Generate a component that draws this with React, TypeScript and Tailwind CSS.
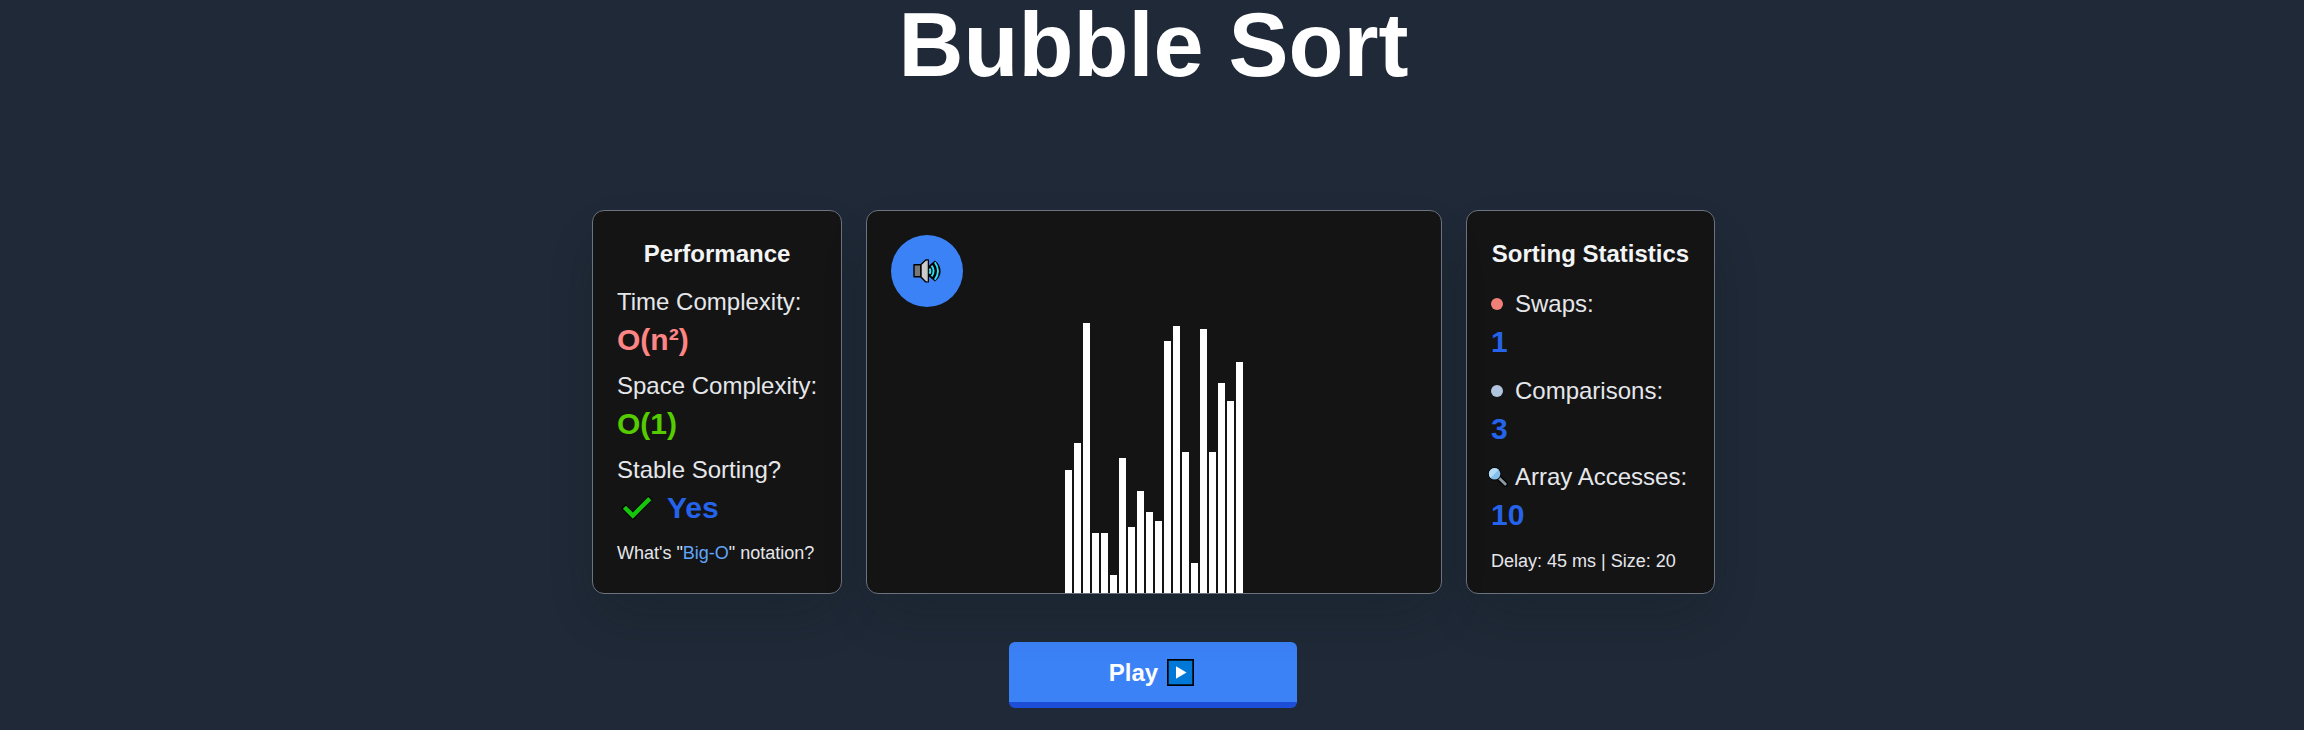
import React from "react";

const bars = [123, 150, 270, 60, 60, 18, 135, 66, 102, 81, 72, 252, 267, 141, 30, 264, 141, 210, 192, 231];

const cardClass =
  "h-96 shrink-0 rounded-xl border border-[#6b7280] bg-[#141414] shadow-[0_25px_50px_-12px_rgba(6,22,18,0.22)]";

function SpeakerIcon() {
  return (
    <svg width="28" height="24" viewBox="0 0 28 24" className="block">
      <path d="M1 5.8h7v12H1z" fill="#767676" stroke="#000" strokeWidth="1.4" strokeLinejoin="round" />
      <path d="M8 5.6L12.8 1h2.5v21.9h-2.5L8 18z" fill="#cccccc" stroke="#000" strokeWidth="1.4" strokeLinejoin="round" />
      <path d="M14.3 1.5v21" stroke="#a5a5a5" strokeWidth="0.8" />
      <path d="M16 6.5L22 1.5Q27.6 6 27.6 12T22 22.5L16 17.5z" fill="#000" />
      <path d="M16.6 9.4Q18.2 12 16.6 14.8" fill="none" stroke="#30dff3" strokeWidth="2" />
      <path d="M18.6 6.6Q22.6 12 18.6 17.4" fill="none" stroke="#30dff3" strokeWidth="1.9" />
      <path d="M21.8 3.2Q28.2 12 21.8 20.8" fill="none" stroke="#30dff3" strokeWidth="1.9" />
    </svg>
  );
}

function CheckIcon() {
  return (
    <svg width="32" height="26" viewBox="0 0 32 26" className="block">
      <path d="M0.4 13.4L4.4 9.2L11.8 16.4L27.6 0.6L31.6 4.6L11.8 25.4z" fill="#000" />
      <path d="M3.4 12.2L11.8 20.6L28.8 3.6" fill="none" stroke="#16c60c" strokeWidth="4.4" />
    </svg>
  );
}

function MagnifierIcon() {
  return (
    <svg width="20" height="20" viewBox="0 0 20 20" className="block">
      <path d="M11 11L17.2 17" stroke="#000" strokeWidth="5.4" strokeLinecap="round" />
      <path d="M11 11L17.2 17" stroke="#8a989f" strokeWidth="3" strokeLinecap="round" />
      <circle cx="6.6" cy="6.8" r="6.6" fill="#000" />
      <circle cx="6.6" cy="6.8" r="5.8" fill="#83beec" />
      <path d="M2.5 10.9A5.8 5.8 0 0 1 10.7 2.7z" fill="#b4daf5" />
    </svg>
  );
}

function PlayIcon() {
  return (
    <svg width="27" height="27" viewBox="0 0 27 27" className="block">
      <rect width="27" height="27" fill="#000" />
      <rect x="1.7" y="1.7" width="23.6" height="23.6" fill="#0078d7" />
      <path d="M9 7.3V19.7L19.5 13.5z" fill="#fff" />
    </svg>
  );
}

function Metric({ label, value, color }: { label: string; value: React.ReactNode; color: string }) {
  return (
    <div className="mb-1.5">
      <div className="text-2xl leading-9 text-[#e5e7eb]">{label}</div>
      <div className={"flex h-[42px] text-3xl leading-[40px] font-bold " + color}>{value}</div>
    </div>
  );
}

function Stat({ label, value, icon }: { label: string; value: number; icon: React.ReactNode }) {
  return (
    <div className="mb-[8.5px]">
      <div className="flex text-2xl leading-9 text-[#e5e7eb]">
        <div className="flex h-9 w-6 shrink-0 items-center">{icon}</div>
        {label}
      </div>
      <div className="h-[42px] text-3xl leading-[40px] font-bold text-[#2563eb]">{value}</div>
    </div>
  );
}

export default function App() {
  return (
    <div className="flex h-[730px] w-[2304px] flex-col items-center overflow-hidden bg-[#1f2937] pl-[3px] font-['Liberation_Sans',Arial,sans-serif]">
      <h1 className="h-[210px] shrink-0 text-[90px] leading-[90px] font-bold whitespace-nowrap text-white">
        Bubble Sort
      </h1>

      <main className="flex gap-6 whitespace-nowrap">
        <section className={cardClass + " w-[250px] px-6 pt-[25px]"}>
          <h2 className="mb-3 text-center text-2xl leading-9 font-bold text-[#f3f4f6]">Performance</h2>
          <Metric label="Time Complexity:" value="O(n²)" color="text-[#ff8585]" />
          <Metric label="Space Complexity:" value="O(1)" color="text-[#55cc00]" />
          <Metric
            label="Stable Sorting?"
            color="text-[#2563eb]"
            value={
              <>
                <span className="mr-3.5 ml-1 pt-[7px]">
                  <CheckIcon />
                </span>
                Yes
              </>
            }
          />
          <p className="mt-[10px] text-lg leading-[27px] text-[#e5e7eb]">
            What's "<a className="text-[#60a5fa]">Big-O</a>" notation?
          </p>
        </section>

        <section className={cardClass + " relative flex w-[576px] items-end justify-center gap-0.5"}>
          <button className="absolute top-6 left-6 flex size-[72px] items-center justify-center rounded-full bg-[#3b82f6]">
            <SpeakerIcon />
          </button>
          {bars.map((height, i) => (
            <div key={i} className="w-[7px] bg-white" style={{ height }} />
          ))}
        </section>

        <section className={cardClass + " w-[249px] px-6 pt-[25px]"}>
          <h2 className="mb-3.5 text-center text-2xl leading-9 font-bold text-[#f3f4f6]">Sorting Statistics</h2>
          <Stat label="Swaps:" value={1} icon={<span className="size-3 rounded-full bg-[#f08078]" />} />
          <Stat label="Comparisons:" value={3} icon={<span className="size-3 rounded-full bg-[#b0c4de]" />} />
          <Stat
            label="Array Accesses:"
            value={10}
            icon={
              <span className="-ml-[3px]">
                <MagnifierIcon />
              </span>
            }
          />
          <p className="mt-[11px] text-lg leading-[27px] text-[#e5e7eb]">Delay: 45 ms | Size: 20</p>
        </section>
      </main>

      <button className="mt-12 mr-px flex h-[66px] w-72 shrink-0 items-center justify-center gap-[9px] rounded-md border-b-6 border-[#1d4ed8] bg-[#3b82f6] pt-px pr-[3px] text-2xl font-bold text-white">
        Play
        <PlayIcon />
      </button>
    </div>
  );
}
